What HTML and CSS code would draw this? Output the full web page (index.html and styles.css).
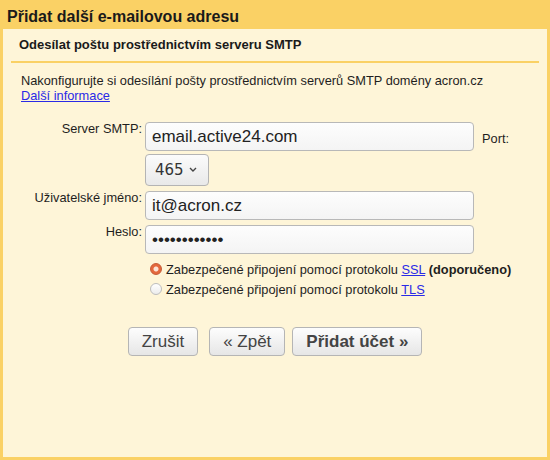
FILE: index.html
```
<!DOCTYPE html>
<html lang="cs">
<head>
<meta charset="utf-8">
<title>Přidat další e-mailovou adresu</title>
<link rel="stylesheet" href="styles.css">
</head>
<body>
<div class="dialog">
  <div class="dialog-title">Přidat další e-mailovou adresu</div>
  <div class="dialog-body">
    <div class="section-head">Odesílat poštu prostřednictvím serveru SMTP</div>
    <p class="intro">Nakonfigurujte si odesílání pošty prostřednictvím serverů SMTP domény acron.cz<br><a href="#">Další informace</a></p>
    <div class="form">
      <label class="lbl">Server SMTP:</label>
      <input class="field" type="text" value="email.active24.com">
      <span class="port">Port:</span>
      <div class="select"><span>465</span><svg width="8" height="5" viewBox="0 0 8 5"><path d="M1 1l3 3 3-3" fill="none" stroke="#444" stroke-width="1.4"/></svg></div>
      <label class="lbl">Uživatelské jméno:</label>
      <input class="field" type="text" value="it@acron.cz">
      <label class="lbl">Heslo:</label>
      <input class="field" type="password" value="xxxxxxxxxxxx">
      <div class="radios">
        <div class="radio-row"><span class="radio checked"></span><span>Zabezpečené připojení pomocí protokolu <a href="#">SSL</a> <b>(doporučeno)</b></span></div>
        <div class="radio-row"><span class="radio"></span><span>Zabezpečené připojení pomocí protokolu <a href="#">TLS</a></span></div>
      </div>
    </div>
    <div class="actions">
      <button class="btn btn-cancel">Zrušit</button>
      <button class="btn">« Zpět</button>
      <button class="btn btn-primary">Přidat účet »</button>
    </div>
  </div>
</div>
</body>
</html>
```
FILE: styles.css
```
html, body {
  margin: 0;
  padding: 0;
}
body {
  font-family: "Liberation Sans", Arial, sans-serif;
  color: #1e1e1e;
  font-size: 12.8px;
}
.dialog {
  height: 460px;
  box-sizing: border-box;
  background: #fad165;
  padding: 0 3px 3px;
  display: flex;
  flex-direction: column;
}
.dialog-title {
  height: 29px;
  box-sizing: border-box;
  padding: 7px 4px 2px;
  font-size: 16px;
  line-height: 20px;
  font-weight: bold;
  color: #1a1a1a;
}
.dialog-body {
  flex: 1;
  background: #fef5d8;
  padding: 0 8px;
}
.section-head {
  padding: 8px 8px;
  line-height: 16px;
  font-size: 13px;
  font-weight: bold;
  color: #1a1a1a;
  border-bottom: 2px solid #fad165;
}
.intro {
  margin: 10px 0 0;
  padding-left: 10px;
  line-height: 15px;
}
a {
  color: #2a2ae6;
  text-decoration: underline;
}
.form {
  margin-top: 19px;
  display: grid;
  grid-template-columns: 131px 329px auto;
  column-gap: 3px;
  row-gap: 5px;
  align-items: start;
}
.lbl {
  grid-column: 1;
  text-align: right;
  line-height: 13px;
}
.field {
  grid-column: 2;
  height: 29px;
  box-sizing: border-box;
  margin: 0;
  padding: 0 6px;
  border: 1px solid #b8b8b8;
  border-radius: 4px;
  background: linear-gradient(#fdfdfd, #f4f4f4);
  font-family: "Liberation Sans", Arial, sans-serif;
  font-size: 17px;
  color: #222;
  outline: none;
}
.port {
  grid-column: 3;
  align-self: center;
  margin-left: 5px;
  margin-top: 3px;
}
.select {
  grid-column: 2;
  justify-self: start;
  margin-top: -2px;
  width: 64px;
  height: 32px;
  box-sizing: border-box;
  border: 1px solid #b4b4b4;
  border-radius: 4px;
  background: linear-gradient(#fbfbfb, #e9e9e9);
  display: flex;
  align-items: center;
  gap: 5px;
  padding-left: 9px;
  font-family: "DejaVu Sans", sans-serif;
  font-size: 15px;
  color: #333;
}
.select svg {
  margin-top: -1px;
}
.radios {
  grid-column: 2 / 4;
  margin-top: 1px;
  margin-left: 5px;
}
.radio-row {
  display: flex;
  align-items: center;
  gap: 4px;
  height: 20px;
  line-height: 20px;
  white-space: nowrap;
}
.radio {
  width: 12px;
  height: 12px;
  box-sizing: border-box;
  border-radius: 50%;
  border: 1px solid #bdbdbd;
  background: linear-gradient(#ffffff, #ececec);
  margin-bottom: 3px;
  flex: none;
}
.radio.checked {
  border-color: #c65a35;
  background: radial-gradient(circle, #fde4d6 0, #fde4d6 2px, #e4683c 3px);
}
.actions {
  margin-top: 27px;
  display: flex;
  justify-content: center;
  gap: 7px;
}
.btn {
  height: 29px;
  box-sizing: border-box;
  margin: 0;
  padding: 0 13px;
  border: 1px solid #b5b5b5;
  border-radius: 4px;
  background: linear-gradient(#fdfdfd, #e6e6e6);
  font-family: "Liberation Sans", Arial, sans-serif;
  font-size: 17px;
  color: #444;
}
.btn-cancel {
  margin-right: 4px;
}
.btn-primary {
  font-weight: bold;
}
```
